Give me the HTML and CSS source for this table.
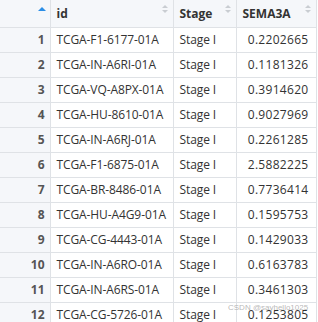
FILE: index.html
```html
<!DOCTYPE html>
<html lang="en">
<head>
  <meta charset="UTF-8">
  <title>Data viewer</title>
  <link rel="stylesheet" href="styles.css">
</head>
<body>
  <div class="viewer">
    <table class="grid">
      <thead>
        <tr>
          <th class="idx"><span class="sort asc"></span></th>
          <th class="c-id">id<span class="sort"></span></th>
          <th class="c-stage">Stage<span class="sort"></span></th>
          <th class="c-val">SEMA3A<span class="sort"></span></th>
        </tr>
      </thead>
      <tbody>
        <tr><td class="idx">1</td><td>TCGA-F1-6177-01A</td><td>Stage I</td><td class="num">0.2202665</td></tr>
        <tr><td class="idx">2</td><td>TCGA-IN-A6RI-01A</td><td>Stage I</td><td class="num">0.1181326</td></tr>
        <tr><td class="idx">3</td><td>TCGA-VQ-A8PX-01A</td><td>Stage I</td><td class="num">0.3914620</td></tr>
        <tr><td class="idx">4</td><td>TCGA-HU-8610-01A</td><td>Stage I</td><td class="num">0.9027969</td></tr>
        <tr><td class="idx">5</td><td>TCGA-IN-A6RJ-01A</td><td>Stage I</td><td class="num">0.2261285</td></tr>
        <tr><td class="idx">6</td><td>TCGA-F1-6875-01A</td><td>Stage I</td><td class="num">2.5882225</td></tr>
        <tr><td class="idx">7</td><td>TCGA-BR-8486-01A</td><td>Stage I</td><td class="num">0.7736414</td></tr>
        <tr><td class="idx">8</td><td>TCGA-HU-A4G9-01A</td><td>Stage I</td><td class="num">0.1595753</td></tr>
        <tr><td class="idx">9</td><td>TCGA-CG-4443-01A</td><td>Stage I</td><td class="num">0.1429033</td></tr>
        <tr><td class="idx">10</td><td>TCGA-IN-A6RO-01A</td><td>Stage I</td><td class="num">0.6163783</td></tr>
        <tr><td class="idx">11</td><td>TCGA-IN-A6RS-01A</td><td>Stage I</td><td class="num">0.3461303</td></tr>
        <tr><td class="idx">12</td><td>TCGA-CG-5726-01A</td><td>Stage I</td><td class="num">0.1253805</td></tr>
      </tbody>
    </table>
    <div class="mark">CSDN @sayhello1025</div>
  </div>
</body>
</html>
```

FILE: styles.css
```css
* { box-sizing: border-box; margin: 0; padding: 0; }
body { background: #fff; font-family: "Open Sans", "Noto Sans", sans-serif; font-size: 12px; color: #333; overflow: hidden; }

.viewer { position: relative; width: 318px; height: 322px; }

/* Tabela */
.grid {
  border-collapse: collapse;
  table-layout: fixed;
  width: 316px;
}
.grid th, .grid td {
  border-right: 1px solid #dfe2e6;
  border-bottom: 1px solid #dfe2e6;
  padding: 0 6px;
  white-space: nowrap;
  overflow: hidden;
  text-align: left;
}
.grid thead tr { height: 27px; }
.grid tbody tr { height: 25px; }

.grid th {
  position: relative;
  background: #f5f7fa;
  font-weight: 700;
  color: #333;
}
.grid th.idx { width: 50px; }
.grid th.c-id { width: 123px; }
.grid th.c-stage { width: 63px; }
.grid th.c-val { width: 80px; }

.grid td { letter-spacing: -0.1px; }
.grid td.idx {
  background: #f5f7fa;
  text-align: right;
  padding-right: 5px;
  font-weight: 700;
  color: #555;
  letter-spacing: 0;
}
.grid td.num { text-align: right; padding-right: 7px; letter-spacing: 0.3px; }

/* Setas de ordenação */
.sort {
  position: absolute;
  top: 5px;
  right: 5px;
  width: 6px;
  height: 8px;
}
.sort::before, .sort::after {
  content: "";
  position: absolute;
  left: 0;
  border-left: 3px solid transparent;
  border-right: 3px solid transparent;
}
.sort::before { top: 0; border-bottom: 3px solid #c9cdd2; }
.sort::after { bottom: 0; border-top: 3px solid #c9cdd2; }
.sort.asc { top: 7px; right: 4px; width: 8px; }
.sort.asc::before { border-left-width: 4px; border-right-width: 4px; border-bottom: 4px solid #2b8ee6; }
.sort.asc::after { display: none; }

/* Marca d'água */
.mark {
  position: absolute;
  left: 228px;
  top: 303px;
  white-space: nowrap;
  font-family: "Liberation Sans", sans-serif;
  font-size: 8px;
  color: rgba(160, 160, 160, 0.75);
}
```
